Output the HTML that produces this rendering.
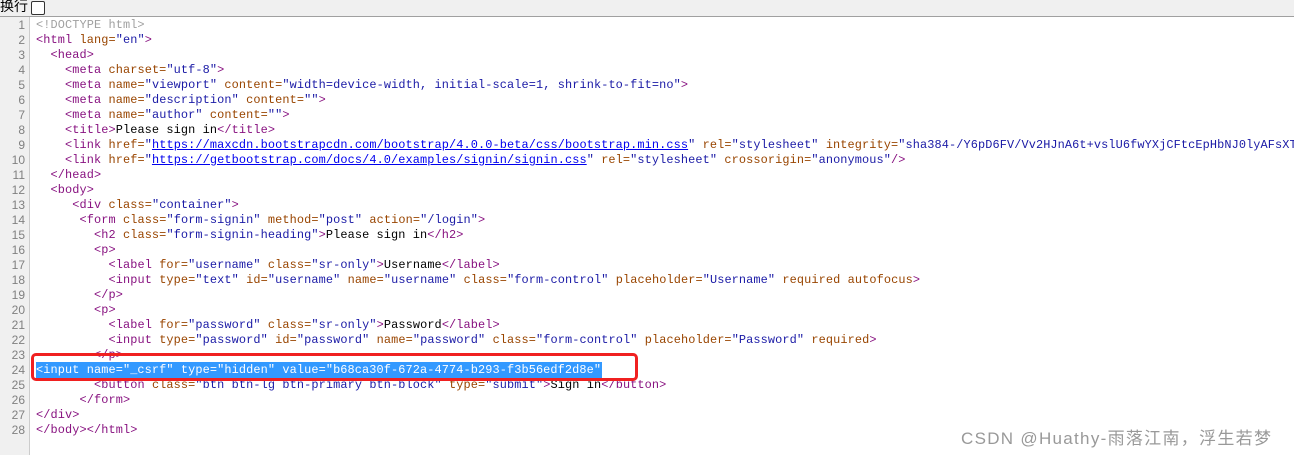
<!DOCTYPE html>
<html><head><meta charset="utf-8"><style>
body{margin:0;width:1294px;height:455px;background:#fff;overflow:hidden;position:relative;font-family:"Liberation Sans","Noto Sans CJK SC",sans-serif}
#top{position:absolute;left:0;top:0;width:1294px;height:16px;background:#f0f0f0;border-bottom:1px solid #a0a0a0;font-size:14px;line-height:14px}
#top span{position:absolute;left:0;top:-1px}
#cb{position:absolute;left:31px;top:1px;width:12px;height:12px;border:1px solid #333;border-radius:2px;background:#fff}
#gut{position:absolute;left:0;top:17px;width:29px;height:438px;background:#f0f0f0;border-right:1px solid #ccc}
.ln{position:absolute;left:0;width:25px;text-align:right;font-family:"Liberation Sans",sans-serif;font-size:12px;color:#808080;line-height:15px;margin-top:1px}
.l{position:absolute;left:36px;white-space:pre;font-family:"Liberation Mono",monospace;font-size:11.9px;letter-spacing:0.11px;line-height:15px;color:#000;margin-top:1px}
.t{color:#881280}.a{color:#994500}.v{color:#1a1aa6}.c{color:#a0a0a0}.u{color:#0000ee;text-decoration:underline}
#sel{position:absolute;left:36px;top:362px;width:566px;height:16px;background:#3399ff}
#box{position:absolute;left:31px;top:353px;width:601px;height:22px;border:3px solid #f02020;border-radius:5px}
#wm{position:absolute;left:961px;top:424px;font-size:17px;letter-spacing:1.3px;color:#999}
</style></head><body>
<div id="top"><span>换行</span><div id="cb"></div></div>
<div id="gut"></div>
<div id="sel"></div>
<div class="ln" style="top:17px">1</div><div class="ln" style="top:32px">2</div><div class="ln" style="top:47px">3</div><div class="ln" style="top:62px">4</div><div class="ln" style="top:77px">5</div><div class="ln" style="top:92px">6</div><div class="ln" style="top:107px">7</div><div class="ln" style="top:122px">8</div><div class="ln" style="top:137px">9</div><div class="ln" style="top:152px">10</div><div class="ln" style="top:167px">11</div><div class="ln" style="top:182px">12</div><div class="ln" style="top:197px">13</div><div class="ln" style="top:212px">14</div><div class="ln" style="top:227px">15</div><div class="ln" style="top:242px">16</div><div class="ln" style="top:257px">17</div><div class="ln" style="top:272px">18</div><div class="ln" style="top:287px">19</div><div class="ln" style="top:302px">20</div><div class="ln" style="top:317px">21</div><div class="ln" style="top:332px">22</div><div class="ln" style="top:347px">23</div><div class="ln" style="top:362px">24</div><div class="ln" style="top:377px">25</div><div class="ln" style="top:392px">26</div><div class="ln" style="top:407px">27</div><div class="ln" style="top:422px">28</div>
<div class="l" style="top:17px"><span class="c">&lt;!DOCTYPE html&gt;</span></div>
<div class="l" style="top:32px"><span class="t">&lt;html </span><span class="a">lang=</span><span class="v">"en"</span><span class="t">&gt;</span></div>
<div class="l" style="top:47px">  <span class="t">&lt;head&gt;</span></div>
<div class="l" style="top:62px">    <span class="t">&lt;meta </span><span class="a">charset=</span><span class="v">"utf-8"</span><span class="t">&gt;</span></div>
<div class="l" style="top:77px">    <span class="t">&lt;meta </span><span class="a">name=</span><span class="v">"viewport"</span> <span class="a">content=</span><span class="v">"width=device-width, initial-scale=1, shrink-to-fit=no"</span><span class="t">&gt;</span></div>
<div class="l" style="top:92px">    <span class="t">&lt;meta </span><span class="a">name=</span><span class="v">"description"</span> <span class="a">content=</span><span class="v">""</span><span class="t">&gt;</span></div>
<div class="l" style="top:107px">    <span class="t">&lt;meta </span><span class="a">name=</span><span class="v">"author"</span> <span class="a">content=</span><span class="v">""</span><span class="t">&gt;</span></div>
<div class="l" style="top:122px">    <span class="t">&lt;title&gt;</span>Please sign in<span class="t">&lt;/title&gt;</span></div>
<div class="l" style="top:137px">    <span class="t">&lt;link </span><span class="a">href=</span><span class="v">"</span><span class="u">https://maxcdn.bootstrapcdn.com/bootstrap/4.0.0-beta/css/bootstrap.min.css</span><span class="v">"</span> <span class="a">rel=</span><span class="v">"stylesheet"</span> <span class="a">integrity=</span><span class="v">"sha384-/Y6pD6FV/Vv2HJnA6t+vslU6fwYXjCFtcEpHbNJ0lyAFsXTsjBbfa</span></div>
<div class="l" style="top:152px">    <span class="t">&lt;link </span><span class="a">href=</span><span class="v">"</span><span class="u">https://getbootstrap.com/docs/4.0/examples/signin/signin.css</span><span class="v">"</span> <span class="a">rel=</span><span class="v">"stylesheet"</span> <span class="a">crossorigin=</span><span class="v">"anonymous"</span><span class="t">/&gt;</span></div>
<div class="l" style="top:167px">  <span class="t">&lt;/head&gt;</span></div>
<div class="l" style="top:182px">  <span class="t">&lt;body&gt;</span></div>
<div class="l" style="top:197px">     <span class="t">&lt;div </span><span class="a">class=</span><span class="v">"container"</span><span class="t">&gt;</span></div>
<div class="l" style="top:212px">      <span class="t">&lt;form </span><span class="a">class=</span><span class="v">"form-signin"</span> <span class="a">method=</span><span class="v">"post"</span> <span class="a">action=</span><span class="v">"/login"</span><span class="t">&gt;</span></div>
<div class="l" style="top:227px">        <span class="t">&lt;h2 </span><span class="a">class=</span><span class="v">"form-signin-heading"</span><span class="t">&gt;</span>Please sign in<span class="t">&lt;/h2&gt;</span></div>
<div class="l" style="top:242px">        <span class="t">&lt;p&gt;</span></div>
<div class="l" style="top:257px">          <span class="t">&lt;label </span><span class="a">for=</span><span class="v">"username"</span> <span class="a">class=</span><span class="v">"sr-only"</span><span class="t">&gt;</span>Username<span class="t">&lt;/label&gt;</span></div>
<div class="l" style="top:272px">          <span class="t">&lt;input </span><span class="a">type=</span><span class="v">"text"</span> <span class="a">id=</span><span class="v">"username"</span> <span class="a">name=</span><span class="v">"username"</span> <span class="a">class=</span><span class="v">"form-control"</span> <span class="a">placeholder=</span><span class="v">"Username"</span> <span class="a">required autofocus</span><span class="t">&gt;</span></div>
<div class="l" style="top:287px">        <span class="t">&lt;/p&gt;</span></div>
<div class="l" style="top:302px">        <span class="t">&lt;p&gt;</span></div>
<div class="l" style="top:317px">          <span class="t">&lt;label </span><span class="a">for=</span><span class="v">"password"</span> <span class="a">class=</span><span class="v">"sr-only"</span><span class="t">&gt;</span>Password<span class="t">&lt;/label&gt;</span></div>
<div class="l" style="top:332px">          <span class="t">&lt;input </span><span class="a">type=</span><span class="v">"password"</span> <span class="a">id=</span><span class="v">"password"</span> <span class="a">name=</span><span class="v">"password"</span> <span class="a">class=</span><span class="v">"form-control"</span> <span class="a">placeholder=</span><span class="v">"Password"</span> <span class="a">required</span><span class="t">&gt;</span></div>
<div class="l" style="top:347px">        <span class="t">&lt;/p&gt;</span></div>
<div class="l" style="top:362px;color:#fff">&lt;input name="_csrf" type="hidden" value="b68ca30f-672a-4774-b293-f3b56edf2d8e" /&gt;</div>
<div class="l" style="top:377px">        <span class="t">&lt;button </span><span class="a">class=</span><span class="v">"btn btn-lg btn-primary btn-block"</span> <span class="a">type=</span><span class="v">"submit"</span><span class="t">&gt;</span>Sign in<span class="t">&lt;/button&gt;</span></div>
<div class="l" style="top:392px">      <span class="t">&lt;/form&gt;</span></div>
<div class="l" style="top:407px"><span class="t">&lt;/div&gt;</span></div>
<div class="l" style="top:422px"><span class="t">&lt;/body&gt;&lt;/html&gt;</span></div>
<div id="box"></div>
<div id="wm">CSDN @Huathy-雨落江南，浮生若梦</div>
</body></html>
